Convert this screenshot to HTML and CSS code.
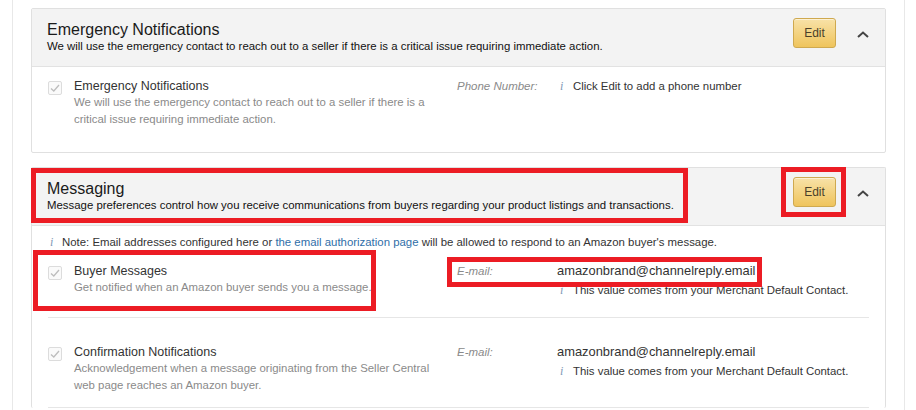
FILE: index.html
```html
<!DOCTYPE html>
<html>
<head>
<meta charset="utf-8">
<link rel="stylesheet" href="styles.css">
</head>
<body>
<div class="page">
  <section class="card">
    <header class="card-head">
      <div class="head-text">
        <h2 class="head-title">Emergency Notifications</h2>
        <p class="head-sub">We will use the emergency contact to reach out to a seller if there is a critical issue requiring immediate action.</p>
      </div>
      <div class="head-actions">
        <button class="edit-btn">Edit</button>
        <svg class="chevron" width="12" height="7" viewBox="0 0 12 7"><polyline points="1,6 6,1.5 11,6" fill="none" stroke="#444" stroke-width="2"/></svg>
      </div>
    </header>
    <div class="card-body body-emergency">
      <div class="item">
        <span class="check"><svg width="10" height="8" viewBox="0 0 10 8"><polyline points="1,4.5 3.8,7 9,1" fill="none" stroke="#bdbdbd" stroke-width="1.3"/></svg></span>
        <div class="item-text">
          <div class="item-title">Emergency Notifications</div>
          <div class="item-desc">We will use the emergency contact to reach out to a seller if there is a critical issue requiring immediate action.</div>
        </div>
        <div class="item-field">
          <span class="field-label">Phone Number:</span>
          <div class="field-val">
            <div class="field-note-main"><span class="info">i</span>Click Edit to add a phone number</div>
          </div>
        </div>
      </div>
    </div>
  </section>

  <section class="card card-messaging">
    <header class="card-head">
      <div class="head-text">
        <h2 class="head-title">Messaging</h2>
        <p class="head-sub">Message preferences control how you receive communications from buyers regarding your product listings and transactions.</p>
      </div>
      <div class="head-actions">
        <button class="edit-btn">Edit</button>
        <svg class="chevron" width="12" height="7" viewBox="0 0 12 7"><polyline points="1,6 6,1.5 11,6" fill="none" stroke="#444" stroke-width="2"/></svg>
      </div>
    </header>
    <div class="card-body body-messaging">
      <p class="note"><span class="info">i</span>Note: Email addresses configured here or <a class="link" href="#">the email authorization page</a> will be allowed to respond to an Amazon buyer's message.</p>
      <div class="item row row-first">
        <span class="check"><svg width="10" height="8" viewBox="0 0 10 8"><polyline points="1,4.5 3.8,7 9,1" fill="none" stroke="#bdbdbd" stroke-width="1.3"/></svg></span>
        <div class="item-text">
          <div class="item-title">Buyer Messages</div>
          <div class="item-desc">Get notified when an Amazon buyer sends you a message.</div>
        </div>
        <div class="item-field">
          <span class="field-label">E-mail:</span>
          <div class="field-val">
            <div class="email">amazonbrand@channelreply.email</div>
            <div class="field-note"><span class="info">i</span>This value comes from your Merchant Default Contact.</div>
          </div>
        </div>
      </div>
      <div class="item row row-next">
        <span class="check"><svg width="10" height="8" viewBox="0 0 10 8"><polyline points="1,4.5 3.8,7 9,1" fill="none" stroke="#bdbdbd" stroke-width="1.3"/></svg></span>
        <div class="item-text">
          <div class="item-title">Confirmation Notifications</div>
          <div class="item-desc">Acknowledgement when a message originating from the Seller Central web page reaches an Amazon buyer.</div>
        </div>
        <div class="item-field">
          <span class="field-label">E-mail:</span>
          <div class="field-val">
            <div class="email">amazonbrand@channelreply.email</div>
            <div class="field-note"><span class="info">i</span>This value comes from your Merchant Default Contact.</div>
          </div>
        </div>
      </div>
    </div>
  </section>
</div>

<div class="mark mark-header"></div>
<div class="mark mark-edit"></div>
<div class="mark mark-buyer"></div>
<div class="mark mark-email"></div>
</body>
</html>
```

FILE: styles.css
```css
* { box-sizing: border-box; }

html, body {
  margin: 0;
  padding: 0;
  background: #ffffff;
  height: 410px;
  overflow: hidden;
}

body {
  position: relative;
  font-family: "Liberation Sans", Arial, sans-serif;
  color: #111;
}

.page {
  margin-left: 12px;
  width: 893px;
  min-height: 410px;
  border-left: 1px solid #e8e8e8;
  border-right: 1px solid #e8e8e8;
  padding: 8px 0 0 18px;
}

.card {
  width: 855px;
  border: 1px solid #e0e0e0;
  border-radius: 2px;
  background: #fff;
}

.card-messaging {
  margin-top: 14px;
  border-bottom: none;
}

.card-head {
  display: flex;
  align-items: flex-start;
  background: #f3f3f3;
  border-bottom: 1px solid #e2e2e2;
  padding: 11px 16px 12px 15px;
}

.head-text { flex: 1; }

.head-title {
  margin: 0;
  font-size: 16px;
  line-height: 19px;
  font-weight: normal;
  color: #1a1a1a;
}

.head-sub {
  margin: 0;
  font-size: 11.4px;
  line-height: 15px;
  color: #111;
}

.head-actions {
  display: flex;
  align-items: flex-start;
  margin-top: -2px;
}

.edit-btn {
  width: 43px;
  height: 30px;
  padding: 0;
  border: 1px solid #cfa94f;
  border-radius: 3px;
  background: linear-gradient(#f8e2a8, #efc45c);
  font-family: "Liberation Sans", Arial, sans-serif;
  font-size: 12px;
  color: #4a3f2a;
  box-shadow: inset 0 1px 0 rgba(255,255,255,0.5);
}

.chevron {
  display: block;
  margin: 13px 0 0 21px;
}

.card-body {
  padding: 0 16px;
}

.body-emergency {
  padding-top: 11px;
  padding-bottom: 25px;
}

.body-messaging {
  padding-top: 8px;
}

.item {
  display: flex;
  align-items: flex-start;
}

.check {
  flex: none;
  width: 14px;
  height: 14px;
  margin-top: 3px;
  margin-right: 12px;
  border: 1px solid #dcdcdc;
  border-radius: 2px;
  background: #fafafa;
  display: flex;
  align-items: center;
  justify-content: center;
}

.item-text {
  width: 365px;
  flex: none;
}

.item-title {
  font-size: 12.5px;
  line-height: 16px;
  color: #333;
}

.item-desc {
  font-size: 11.4px;
  line-height: 16.5px;
  color: #8a8a8a;
}

.item-field {
  display: flex;
  margin-left: 18px;
}

.field-label {
  width: 100px;
  flex: none;
  font-size: 11.5px;
  line-height: 16px;
  font-style: italic;
  color: #8a8a8a;
}

.field-val {
  font-size: 11.4px;
  line-height: 16px;
  color: #333;
}

.field-note-main {
  display: flex;
  color: #333;
}

.email {
  font-size: 12.9px;
  line-height: 16px;
  color: #333;
}

.field-note {
  display: flex;
  margin-top: 3px;
  color: #333;
}

.info {
  display: inline-block;
  width: 16px;
  padding-left: 3px;
  font-family: "Liberation Serif", "Times New Roman", serif;
  font-style: italic;
  font-size: 12px;
  color: #7f98b5;
}

.note {
  margin: 0;
  font-size: 11.4px;
  line-height: 16px;
  color: #333;
  white-space: nowrap;
}

.note .info { padding-left: 2px; width: 14px; }

.link {
  color: #2f6ea8;
  text-decoration: none;
}

.row {
  border-bottom: 1px solid #e6e6e6;
}

.row-first {
  margin-top: 13px;
  padding-bottom: 19px;
}

.row-next {
  padding-top: 26px;
  padding-bottom: 14px;
}

.mark {
  position: absolute;
  border: 5px solid #ec1c24;
}

.mark-header { left: 31px; top: 168px; width: 657px; height: 55px; }
.mark-edit   { left: 781px; top: 167px; width: 65px; height: 50px; }
.mark-buyer  { left: 33px; top: 250px; width: 343px; height: 61px; }
.mark-email  { left: 447px; top: 257px; width: 315px; height: 30px; }
```
